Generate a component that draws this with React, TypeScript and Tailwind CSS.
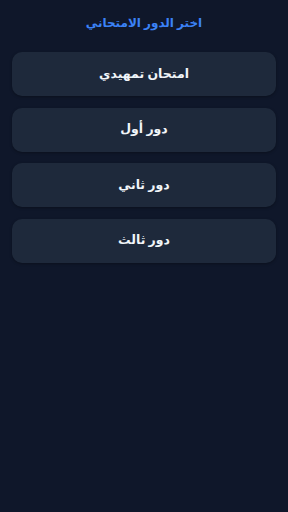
import React from "react";

const items = ["امتحان تمهيدي", "دور أول", "دور ثاني", "دور ثالث"];

export default function App() {
  return (
    <div
      dir="rtl"
      className="min-h-[512px] w-full bg-[#0f172a] px-3 pt-[13px]"
      style={{ fontFamily: '"Noto Sans", "DejaVu Sans", sans-serif' }}
    >
      <h1 className="text-center text-[12px] font-semibold leading-[20px] text-[#3b82f6]">
        اختر الدور الامتحاني
      </h1>
      <div className="mt-[19px] flex flex-col gap-[11.5px]">
        {items.map((t) => (
          <button
            key={t}
            className="flex h-[44px] w-full items-center justify-center rounded-[10px] bg-[#1e293b] text-[12.5px] font-semibold text-[#f1f5f9] shadow-[0_1px_3px_rgba(0,0,0,0.3)]"
          >
            {t}
          </button>
        ))}
      </div>
    </div>
  );
}
